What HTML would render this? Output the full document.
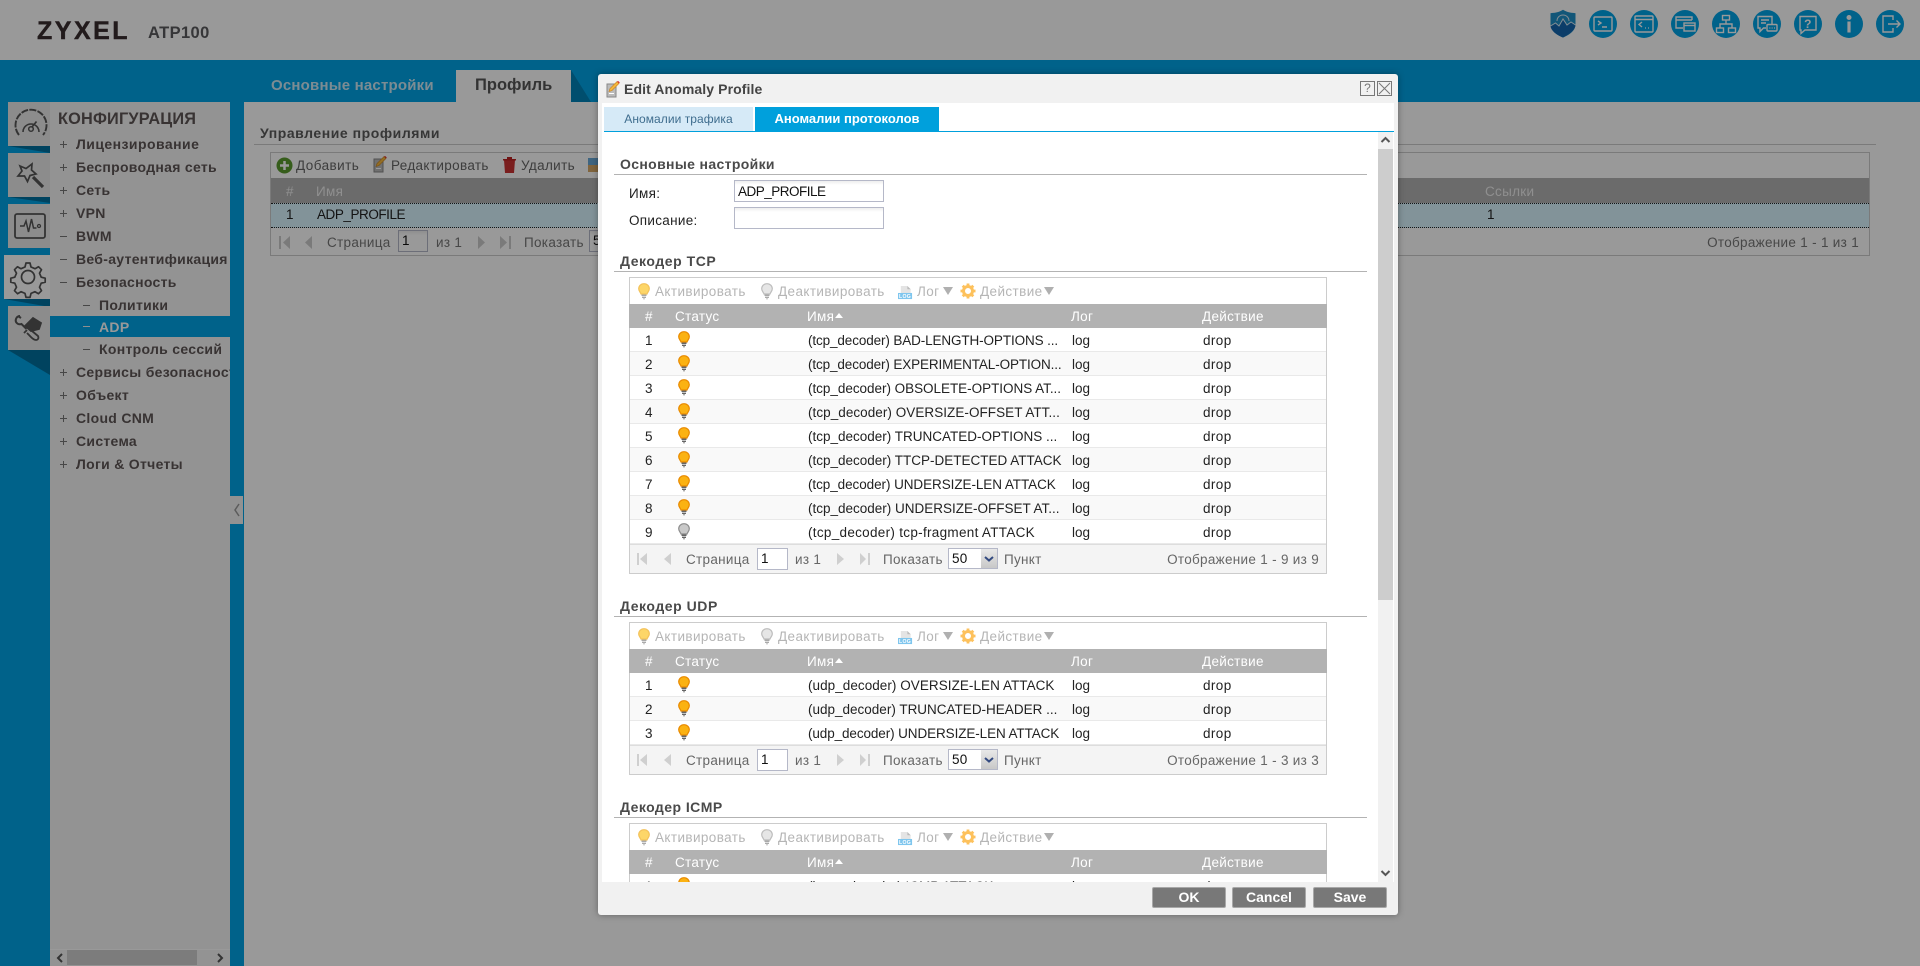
<!DOCTYPE html>
<html lang="ru"><head><meta charset="utf-8"><title>ATP100</title>
<style>
html,body{margin:0;padding:0;width:1920px;height:966px;overflow:hidden;background:#fff}
body{font-family:"Liberation Sans",sans-serif;font-size:13.5px;letter-spacing:.3px;color:#222;position:relative}
.a{position:absolute;white-space:nowrap;line-height:20px}
svg{position:absolute;display:block;overflow:visible}
#ov{position:absolute;left:0;top:0;width:1920px;height:966px;background:rgba(0,0,0,.4)}
.si{position:absolute;left:26px;font-weight:bold;font-size:14px;line-height:20px;color:#5e5555;white-space:nowrap;letter-spacing:.3px}
.sub{left:49px}
.pm{position:absolute;left:10px;width:7px;height:1px;background:#777}
.pm.p:after{content:"";position:absolute;left:3px;top:-3px;width:1px;height:7px;background:#777}
.sub2{left:33px;width:7px}
.ic{position:absolute;width:42px;height:44px;left:8px;background:#eaeaea}
.cir{position:absolute;top:10px;width:28px;height:28px;border-radius:50%;background:#00a3e6}
.cir svg{left:0;top:0}
.cir *{fill:none;stroke:#fff;stroke-width:1.4}
#modal{position:absolute;left:598px;top:74px;width:800px;height:841px;background:#f1f1f1;border-radius:3px;box-shadow:0 0 7px rgba(0,0,0,.35)}
.sh{position:absolute;left:620px;font-weight:bold;font-size:14px;line-height:20px;color:#4a4a4a;white-space:nowrap;letter-spacing:.35px}
.ln{position:absolute;left:614px;width:753px;height:1px;background:#b3b3b3}
.box{position:absolute;left:629px;width:696px;border:1px solid #ccc;background:#fff;height:auto}
.tb{color:#b5b5b5;top:4px;letter-spacing:.4px}
.hd{position:absolute;left:-1px;right:-1px;top:26px;height:24px;background:#b2b2b2;color:#fff}
.hd .a{top:3px}
.r{position:absolute;left:0;right:0;height:23px;border-bottom:1px solid #e9e9e9}
.r.e{background:#f9f9f9}
.r .a{top:3px;letter-spacing:0}
.r svg{top:3px}
.pg{position:absolute;left:0;right:0;height:28px;background:#f4f4f4;border-top:1px solid #ddd;color:#666}
.pg .a{top:5px}
.inp{position:absolute;box-sizing:border-box;border:1px solid #b5b8c8;background:linear-gradient(#eee,#fff 4px);color:#111;padding-left:3px;line-height:19px}
.tri{position:absolute;width:0;height:0;border-left:5px solid transparent;border-right:5px solid transparent;border-top:8px solid #b0b0b0}
.btn{position:absolute;top:887px;width:74px;height:21px;box-sizing:border-box;background:#787878;border:1px solid #a8a8a8;border-radius:2px;color:#fff;font-weight:bold;font-size:14px;letter-spacing:0;text-align:center;line-height:19px}
</style></head><body>
<svg width="0" height="0" style="position:absolute"><defs>
<symbol id="bulb" viewBox="0 0 12 17"><path d="M6 .7C2.9.7.7 3 .7 5.8c0 2.3 1.700 3.300 2.300 5.200h6c.6-1.900 2.300-2.900 2.300-5.200C11.300 3 9.100.7 6 .7z" fill="#fbb212" stroke="#e98a00" stroke-width="1.200"/><path d="M3.500 11.500h5v1.500h-5zM4 13.600h4v1.400H4z" fill="#666"/><path d="M5 15.300h2v1H5z" fill="#888"/></symbol>
<symbol id="bulbg" viewBox="0 0 12 17"><path d="M6 .7C2.900.7.700 3 .700 5.800c0 2.300 1.700 3.300 2.300 5.200h6c.6-1.900 2.300-2.900 2.300-5.200C11.300 3 9.100.7 6 .7z" fill="#c9c9c9" stroke="#8d8d8d" stroke-width="1.200"/><path d="M3.500 11.500h5v1.500h-5zM4 13.600h4v1.400H4z" fill="#666"/><path d="M5 15.300h2v1H5z" fill="#888"/></symbol>
<symbol id="bulbl" viewBox="0 0 12 17"><path d="M6 .7C2.900.7.700 3 .700 5.800c0 2.300 1.700 3.300 2.300 5.200h6c.6-1.900 2.300-2.900 2.300-5.200C11.300 3 9.100.7 6 .7z" fill="#fdd668" stroke="#f3c25a" stroke-width="1.200"/><path d="M3.500 11.500h5v1.500h-5zM4 13.600h4v1.400H4z" fill="#aaa"/><path d="M5 15.300h2v1H5z" fill="#bbb"/></symbol>
<symbol id="bulblg" viewBox="0 0 12 17"><path d="M6 .7C2.900.7.700 3 .700 5.800c0 2.300 1.700 3.300 2.300 5.200h6c.6-1.900 2.300-2.900 2.300-5.200C11.300 3 9.100.7 6 .7z" fill="#e6e6e6" stroke="#bdbdbd" stroke-width="1.200"/><path d="M3.500 11.500h5v1.500h-5zM4 13.600h4v1.400H4z" fill="#aaa"/><path d="M5 15.300h2v1H5z" fill="#bbb"/></symbol>
<symbol id="log" viewBox="0 0 16 15"><path d="M3 .5h7l3.500 3.500v7H3z" fill="#e4e4e4"/><path d="M10 .5V4h3.500z" fill="#bbb"/><rect x="0" y="8" width="15" height="6.500" fill="#7fc6ee"/><text x="7.500" y="13.500" font-size="5.500" font-weight="bold" fill="#fff" text-anchor="middle" font-family="Liberation Sans">LOG</text></symbol>
<symbol id="gear" viewBox="0 0 16 16"><circle cx="8" cy="8" r="4.500" fill="none" stroke="#fdc15c" stroke-width="3"/><path d="M8 .5v3M8 12.500v3M.5 8h3M12.500 8h3M2.700 2.700l2.100 2.100M11.200 11.200l2.100 2.100M2.700 13.300l2.100-2.100M11.200 4.800l2.100-2.100" stroke="#fdc15c" stroke-width="2.800"/></symbol>
<symbol id="pencil" viewBox="0 0 14 17"><path d="M1 3h9v13H1z" fill="#bbb" stroke="#888"/><path d="M3 12h5v1H3z" fill="#fff"/><path d="M3 10.500l1-3 7-7 2 2-7 7z" fill="#f4b63d" stroke="#c8801c" stroke-width=".6"/><path d="M11 .5l2 2 .8-1L12.200 0z" fill="#d33"/></symbol>
</defs></svg>

<!-- HEADER -->
<div class="a" style="left:37px;top:19px;font-size:25px;line-height:24px;font-weight:bold;letter-spacing:2.500px;color:#3a2d30;-webkit-text-stroke:.4px #3a2d30">ZYXEL</div>
<div class="a" style="left:148px;top:23px;font-size:16.500px;font-weight:bold;color:#5a5a5e;letter-spacing:.4px">ATP100</div>

<svg style="left:1549px;top:9px" width="28" height="29" viewBox="0 0 28 29"><path d="M14 .8C10 3.500 5 4 1.500 4.200v11C1.500 22 8 26 14 28.500 20 26 26.500 22 26.500 15.200v-11C23 4 18 3.500 14 .8z" fill="#1f8fc8"/><path d="M1.500 17l5-3 3.500 3 4-7 4 6 4-3 4.500 3c-.5 5-6 9-12.500 12.500C8 26 2 22 1.500 17z" fill="#1466b0"/><path d="M14 6c-3.500 0-6 2.700-6 6M14 6c3.500 0 6 2.700 6 6M1.500 17l5-3 3.500 3 4-7 4 6 4-3 4.500 3" fill="none" stroke="#d9eaf4" stroke-width="1"/></svg>
<div class="cir" style="left:1589px"><svg width="28" height="28" viewBox="0 0 28 28"><rect x="5" y="7" width="18" height="14" rx="1"/><path d="M9 11l3 2-3 2M13 17h5"/></svg></div>
<div class="cir" style="left:1630px"><svg width="28" height="28" viewBox="0 0 28 28"><rect x="5" y="6" width="18" height="16" rx="1"/><path d="M5 9.500h18M12 12l-3 2.500 3 2.500M15 18h.8M18 18h.8"/></svg></div>
<div class="cir" style="left:1671px"><svg width="28" height="28" viewBox="0 0 28 28"><path d="M21 10V7H5v11h7M5 10h16"/><rect x="13" y="13" width="11" height="8"/><path d="M13 15.500h11"/></svg></div>
<div class="cir" style="left:1712px"><svg width="28" height="28" viewBox="0 0 28 28"><rect x="10.500" y="5.500" width="7" height="4.500"/><path d="M14 10v4M8 18v-4h12v4"/><rect x="4.500" y="18" width="7" height="4.500"/><rect x="16.500" y="18" width="7" height="4.500"/></svg></div>
<div class="cir" style="left:1753px"><svg width="28" height="28" viewBox="0 0 28 28"><path d="M19 14V6.500H5V18h2v3.500l3.500-3.500H13"/><path d="M8 10h8M8 13h5"/><rect x="14" y="14.500" width="10" height="6.500" rx="1"/><path d="M16.500 18h.8M18.700 18h.8M21 18h.8" stroke-width="1.500"/></svg></div>
<div class="cir" style="left:1794px"><svg width="28" height="28" viewBox="0 0 28 28"><path d="M6 6.500h16V20H11l-4 3.500V20H6z"/><text x="14" y="18" font-size="12" font-weight="bold" text-anchor="middle" font-family="Liberation Sans" style="fill:#fff;stroke:none">?</text></svg></div>
<div class="cir" style="left:1835px"><svg width="28" height="28" viewBox="0 0 28 28"><circle cx="14" cy="7.500" r="1.800" style="fill:#fff"/><path d="M14 11.500v11" style="stroke-width:3.200"/></svg></div>
<div class="cir" style="left:1876px"><svg width="28" height="28" viewBox="0 0 28 28"><path d="M17 10V6H7v16h10v-4M12 14h12M20.500 10.500L24 14l-3.500 3.500"/></svg></div>

<!-- BLUE -->
<div style="position:absolute;left:0;top:60px;width:1920px;height:906px;background:#00a3e6"></div>
<div style="position:absolute;left:244px;top:102px;width:1676px;height:864px;background:#fff"></div>
<div class="a" style="left:271px;top:76px;font-size:15px;font-weight:bold;color:#cfe9f5;letter-spacing:.2px">Основные настройки</div>
<div style="position:absolute;left:456px;top:70px;width:115px;height:32px;background:#fff"></div>
<svg style="left:571px;top:70px" width="27" height="32"><path d="M0 0l20 32H0z" fill="#0082b8"/></svg>
<div class="a" style="left:475px;top:75px;font-size:16.500px;font-weight:bold;color:#555;letter-spacing:0">Профиль</div>

<!-- LEFT ICONS -->
<svg style="left:0;top:146px" width="50" height="250"><path d="M8 0l42 7V0z" fill="#00719f"/><path d="M8 51l42 6v-6z" fill="#00719f"/><path d="M4 153l46 8v-8z" fill="#00719f"/><path d="M8 204l42 25v-25z" fill="#00719f"/></svg>
<div class="ic" style="top:102px"><svg width="42" height="44" viewBox="0 0 42 44" fill="none" stroke="#555" stroke-width="1.900"><path d="M11 33a15.500 15.500 0 1 1 24 0" stroke-dasharray="7 1.300"/><path d="M15 30a8 8 0 0 1 16 0" stroke-width="1.600"/><circle cx="23" cy="27" r="2.300" stroke-width="1.500"/><path d="M24 25l4.500-5.500" stroke-width="1.700"/></svg></div>
<div class="ic" style="top:153px"><svg width="42" height="44" viewBox="0 0 42 44" fill="none" stroke="#555" stroke-width="1.700"><path d="M12 13L18 15.500 24 11 23.500 17 28 21 22 22.500 19.500 28.500 16.500 23 10 23 14 18z"/><path d="M25 24l10 10" stroke-width="3.200"/></svg></div>
<div class="ic" style="top:204px"><svg width="42" height="44" viewBox="0 0 42 44" fill="none" stroke="#555" stroke-width="1.800"><rect x="7" y="10" width="30" height="24" rx="2"/><path d="M12 22h4l2-5 2.500 11 3-13 2 9h3" stroke-width="1.500"/><circle cx="31" cy="22" r="1.500" stroke-width="1.300"/></svg></div>
<div class="ic" style="top:255px;left:4px;width:46px;background:#fff"><svg width="46" height="44" viewBox="0 0 46 44" fill="none" stroke="#555" stroke-width="1.700"><path d="M21 8h4l1 4 4 1.700 3.500-2 3 3-2 3.500 1.700 4 4 1v4l-4 1-1.700 4 2 3.500-3 3-3.500-2-4 1.700-1 4h-4l-1-4-4-1.700-3.500 2-3-3 2-3.500-1.700-4-4-1v-4l4-1 1.700-4-2-3.500 3-3 3.500 2 4-1.700z" stroke-linejoin="round" transform="translate(1,0)"/><circle cx="24" cy="22" r="6.500"/></svg></div>
<div class="ic" style="top:306px"><svg width="42" height="44" viewBox="0 0 42 44" fill="none" stroke="#555" stroke-width="1.800"><path d="M12 10c-3 0-5 3-4 6 1.500 2.500 4 2.500 5.500 2l5 5M10 10l3 2" stroke-width="2"/><path d="M17 20l8-8 8 5-2 6-8 2z" fill="#555"/><path d="M19 24l-3 3M24 25l6 5c1 2 0 4-2 4-3 0-5-3-7-5l-2-2" stroke-width="1.800"/></svg></div>

<!-- SIDEBAR -->
<div style="position:absolute;left:50px;top:102px;width:180px;height:864px;background:#f5f5f5;overflow:hidden">
<div class="si" style="left:8px;top:6px;font-size:16.300px;letter-spacing:.2px;line-height:22px">КОНФИГУРАЦИЯ</div>
<div class="pm p" style="top:42px"></div><div class="si" style="top:32px;letter-spacing:.45px">Лицензирование</div>
<div class="pm p" style="top:65px"></div><div class="si" style="top:55px">Беспроводная сеть</div>
<div class="pm p" style="top:88px"></div><div class="si" style="top:78px">Сеть</div>
<div class="pm p" style="top:111px"></div><div class="si" style="top:101px">VPN</div>
<div class="pm" style="top:134px"></div><div class="si" style="top:124px">BWM</div>
<div class="pm" style="top:157px"></div><div class="si" style="top:147px">Веб-аутентификация</div>
<div class="pm" style="top:180px"></div><div class="si" style="top:170px">Безопасность</div>
<div class="pm sub2" style="top:203px"></div><div class="si sub" style="top:193px">Политики</div>
<div style="position:absolute;left:0;top:214px;width:180px;height:21px;background:#00a3e6"></div>
<div class="pm sub2" style="top:224px;background:#eee"></div><div class="si sub" style="top:215px;color:#fff">ADP</div>
<div class="pm sub2" style="top:247px"></div><div class="si sub" style="top:237px">Контроль сессий</div>
<div class="pm p" style="top:270px"></div><div class="si" style="top:260px">Сервисы безопасности</div>
<div class="pm p" style="top:293px"></div><div class="si" style="top:283px">Объект</div>
<div class="pm p" style="top:316px"></div><div class="si" style="top:306px">Cloud CNM</div>
<div class="pm p" style="top:339px"></div><div class="si" style="top:329px">Система</div>
<div class="pm p" style="top:362px"></div><div class="si" style="top:352px">Логи &amp; Отчеты</div>
<div style="position:absolute;left:0;top:847px;width:180px;height:1px;background:#fff"></div>
<div style="position:absolute;left:17px;top:848px;width:130px;height:15px;background:#cfcfcf"></div>
<svg style="left:5px;top:851px" width="170" height="10" fill="none" stroke="#555" stroke-width="2"><path d="M7 1L3 5l4 4M163 1l4 4-4 4"/></svg>
</div>
<div style="position:absolute;left:230px;top:496px;width:13px;height:28px;background:#f3f3f3"></div>
<svg style="left:233px;top:503px" width="8" height="14" fill="none" stroke="#999" stroke-width="1.500"><path d="M6 1L2 7l4 6"/></svg>

<!-- BACK PAGE -->
<div class="a" style="left:260px;top:123px;font-size:14px;font-weight:bold;color:#5a5a5a;letter-spacing:.55px">Управление профилями</div>
<div style="position:absolute;left:254px;top:144px;width:1622px;height:1px;background:#ccc"></div>
<div style="position:absolute;left:270px;top:152px;width:1598px;height:102px;border:1px solid #ccc;background:#fff"></div>
<svg style="left:276px;top:157px" width="17" height="17"><circle cx="8.500" cy="8.500" r="8" fill="#5a9c2e"/><path d="M8.500 4v9M4 8.500h9" stroke="#fff" stroke-width="2.500"/></svg>
<div class="a" style="left:296px;top:156px;color:#666;letter-spacing:.45px">Добавить</div>
<svg style="left:373px;top:156px" width="14" height="17"><use href="#pencil"/></svg>
<div class="a" style="left:391px;top:156px;color:#666;letter-spacing:.35px">Редактировать</div>
<svg style="left:503px;top:157px" width="13" height="16"><path d="M1 3h11l-1 13H2z" fill="#c33"/><path d="M0 2h13v1.500H0zM4 0h5v2H4z" fill="#b22"/></svg>
<div class="a" style="left:521px;top:156px;color:#666;letter-spacing:.35px">Удалить</div>
<div style="position:absolute;left:588px;top:158px;width:12px;height:7px;background:#6aa9d8"></div>
<div style="position:absolute;left:588px;top:165px;width:12px;height:7px;background:#d8a868"></div>
<div style="position:absolute;left:271px;top:178px;width:1598px;height:25px;background:#b2b2b2"></div>
<div class="a" style="left:286px;top:182px;color:#eee">#</div>
<div class="a" style="left:316px;top:182px;color:#eee">Имя</div>
<div class="a" style="left:1485px;top:182px;color:#eee">Ссылки</div>
<div style="position:absolute;left:271px;top:203px;width:1598px;height:23px;background:#d9f5ff;border-top:1px dotted #222;border-bottom:1px dotted #222"></div>
<div class="a" style="left:286px;top:205px;color:#222">1</div>
<div class="a" style="left:317px;top:205px;color:#222;letter-spacing:-.45px">ADP_PROFILE</div>
<div class="a" style="left:1487px;top:205px;color:#222">1</div>
<svg style="left:279px;top:236px" width="240" height="14" fill="#ccc"><path d="M0 0h2v13H0zM11 0v13L4 6.500zM33 0v13l-7-6.500zM199 0v13l7-6.500zM221 0v13l7-6.500zM230 0h2v13h-2z"/></svg>
<div class="a" style="left:327px;top:233px;color:#777">Страница</div>
<div class="inp" style="left:398px;top:230px;width:30px;height:22px">1</div>
<div class="a" style="left:436px;top:233px;color:#777">из 1</div>
<div class="a" style="left:524px;top:233px;color:#777">Показать</div>
<div class="inp" style="left:589px;top:230px;width:30px;height:22px">50</div>
<div class="a" style="right:61px;top:233px;color:#777">Отображение 1 - 1 из 1</div>

<div id="ov"></div>

<!-- MODAL -->
<div id="modal"></div>
<svg style="left:606px;top:81px" width="14" height="17"><use href="#pencil"/></svg>
<div class="a" style="left:624px;top:79px;font-size:14px;font-weight:bold;color:#444;letter-spacing:.1px">Edit Anomaly Profile</div>
<div style="position:absolute;left:1360px;top:81px;width:13px;height:13px;border:1px solid #777;text-align:center;font-size:12px;line-height:13px;color:#777;letter-spacing:0">?</div>
<svg style="left:1377px;top:81px" width="15" height="15" fill="none" stroke="#777"><path d="M.5.500h14v14H.5zM2 2l11 11M13 2L2 13"/></svg>

<div style="position:absolute;left:602px;top:103px;width:792px;height:779px;background:#fff"></div>
<div style="position:absolute;left:604px;top:107px;width:149px;height:24px;background:#d6eaf7;color:#3f6d8e;line-height:24px;text-align:center;font-size:12px;letter-spacing:.05px">Аномалии трафика</div>
<div style="position:absolute;left:755px;top:107px;width:184px;height:24px;background:#00a0dc;color:#fff;line-height:24px;text-align:center;font-size:13px;font-weight:bold;letter-spacing:0">Аномалии протоколов</div>
<div style="position:absolute;left:604px;top:131px;width:790px;height:1px;background:#00a0dc"></div>

<!-- scrollbar -->
<div style="position:absolute;left:1378px;top:132px;width:15px;height:750px;background:#f1f1f1"></div>
<div style="position:absolute;left:1378px;top:149px;width:15px;height:451px;background:#cdcdcd"></div>
<svg style="left:1380px;top:136px" width="11" height="8" fill="none" stroke="#555" stroke-width="2"><path d="M1.500 6l4-4 4 4"/></svg>
<svg style="left:1380px;top:869px" width="11" height="8" fill="none" stroke="#555" stroke-width="2"><path d="M1.500 2l4 4 4-4"/></svg>

<!-- scroll content -->
<div style="position:absolute;left:0;top:0;width:1920px;height:966px;clip-path:inset(132px 0 84px 0)">
<div class="sh" style="top:154px">Основные настройки</div><div class="ln" style="top:174px"></div>
<div class="a" style="left:629px;top:184px">Имя:</div>
<div class="inp" style="left:734px;top:180px;width:150px;height:22px;line-height:22px;letter-spacing:-.5px">ADP_PROFILE</div>
<div class="a" style="left:629px;top:211px">Описание:</div>
<div class="inp" style="left:734px;top:207px;width:150px;height:22px"></div>

<div class="sh" style="top:251px;letter-spacing:.55px">Декодер TCP</div><div class="ln" style="top:271px"></div>
<div class="box" style="top:277px;height:295px">
<svg style="left:8px;top:5px" width="12" height="17"><use href="#bulbl"/></svg><div class="a tb" style="left:25px">Активировать</div>
<svg style="left:131px;top:5px" width="12" height="17"><use href="#bulblg"/></svg><div class="a tb" style="left:148px">Деактивировать</div>
<svg style="left:268px;top:7px" width="15" height="15"><use href="#log"/></svg><div class="a tb" style="left:287px">Лог</div><div class="tri" style="left:313px;top:9px"></div>
<svg style="left:330px;top:5px" width="16" height="16"><use href="#gear"/></svg><div class="a tb" style="left:350px">Действие</div><div class="tri" style="left:414px;top:9px"></div>
<div class="hd"><div class="a" style="left:16px">#</div><div class="a" style="left:46px">Статус</div><div class="a" style="left:178px">Имя</div><div class="tri" style="left:206px;top:9px;border-left-width:4px;border-right-width:4px;border-top:0;border-bottom:5px solid #fff"></div><div class="a" style="left:442px">Лог</div><div class="a" style="left:573px">Действие</div></div>
<div class="r" style="top:50px"><div class="a" style="left:15px">1</div><svg style="left:48px" width="12" height="17"><use href="#bulb"/></svg><div class="a" style="left:178px;letter-spacing:-.12px">(tcp_decoder) BAD-LENGTH-OPTIONS ...</div><div class="a" style="left:442px">log</div><div class="a" style="left:573px;letter-spacing:.4px">drop</div></div>
<div class="r e" style="top:74px"><div class="a" style="left:15px">2</div><svg style="left:48px" width="12" height="17"><use href="#bulb"/></svg><div class="a" style="left:178px;letter-spacing:-.12px">(tcp_decoder) EXPERIMENTAL-OPTION...</div><div class="a" style="left:442px">log</div><div class="a" style="left:573px;letter-spacing:.4px">drop</div></div>
<div class="r" style="top:98px"><div class="a" style="left:178px;letter-spacing:-.03px">(tcp_decoder) OBSOLETE-OPTIONS AT...</div><div class="a" style="left:15px">3</div><svg style="left:48px" width="12" height="17"><use href="#bulb"/></svg><div class="a" style="left:442px">log</div><div class="a" style="left:573px;letter-spacing:.4px">drop</div></div>
<div class="r e" style="top:122px"><div class="a" style="left:15px">4</div><svg style="left:48px" width="12" height="17"><use href="#bulb"/></svg><div class="a" style="left:178px;letter-spacing:.05px">(tcp_decoder) OVERSIZE-OFFSET ATT...</div><div class="a" style="left:442px">log</div><div class="a" style="left:573px;letter-spacing:.4px">drop</div></div>
<div class="r" style="top:146px"><div class="a" style="left:15px">5</div><svg style="left:48px" width="12" height="17"><use href="#bulb"/></svg><div class="a" style="left:178px">(tcp_decoder) TRUNCATED-OPTIONS ...</div><div class="a" style="left:442px">log</div><div class="a" style="left:573px;letter-spacing:.4px">drop</div></div>
<div class="r e" style="top:170px"><div class="a" style="left:15px">6</div><svg style="left:48px" width="12" height="17"><use href="#bulb"/></svg><div class="a" style="left:178px">(tcp_decoder) TTCP-DETECTED ATTACK</div><div class="a" style="left:442px">log</div><div class="a" style="left:573px;letter-spacing:.4px">drop</div></div>
<div class="r" style="top:194px"><div class="a" style="left:15px">7</div><svg style="left:48px" width="12" height="17"><use href="#bulb"/></svg><div class="a" style="left:178px;letter-spacing:-.07px">(tcp_decoder) UNDERSIZE-LEN ATTACK</div><div class="a" style="left:442px">log</div><div class="a" style="left:573px;letter-spacing:.4px">drop</div></div>
<div class="r e" style="top:218px"><div class="a" style="left:15px">8</div><svg style="left:48px" width="12" height="17"><use href="#bulb"/></svg><div class="a" style="left:178px">(tcp_decoder) UNDERSIZE-OFFSET AT...</div><div class="a" style="left:442px">log</div><div class="a" style="left:573px;letter-spacing:.4px">drop</div></div>
<div class="r" style="top:242px"><div class="a" style="left:15px">9</div><svg style="left:48px" width="12" height="17"><use href="#bulbg"/></svg><div class="a" style="left:178px;letter-spacing:.3px">(tcp_decoder) tcp-fragment ATTACK</div><div class="a" style="left:442px">log</div><div class="a" style="left:573px;letter-spacing:.4px">drop</div></div>
<div class="pg" style="top:266px"><svg style="left:7px;top:8px" width="230" height="13" fill="#cfcfcf"><path d="M0 0h2v12H0zM10 0v12L3 6zM34 0v12l-7-6zM200 0v12l7-6zM223 0v12l6-6zM231 0h2v12h-2z"/></svg><div class="a" style="left:56px">Страница</div><div class="inp" style="left:127px;top:3px;width:31px;height:22px;line-height:19px;background:#fff">1</div><div class="a" style="left:165px">из 1</div><div class="a" style="left:253px">Показать</div><div class="inp" style="left:318px;top:3px;width:50px;height:21px;background:#fff">50</div><div style="position:absolute;left:351px;top:4px;width:16px;height:19px;background:linear-gradient(#e8e8e8,#c8c8c8)"></div><svg style="left:354px;top:11px" width="10" height="6" fill="none" stroke="#334a80" stroke-width="2"><path d="M1 1l4 3.500L9 1"/></svg><div class="a" style="left:374px">Пункт</div><div class="a" style="right:7px">Отображение 1 - 9 из 9</div></div>
</div>

<div class="sh" style="top:596px;letter-spacing:.55px">Декодер UDP</div><div class="ln" style="top:616px"></div>
<div class="box" style="top:622px;height:151px">
<svg style="left:8px;top:5px" width="12" height="17"><use href="#bulbl"/></svg><div class="a tb" style="left:25px">Активировать</div>
<svg style="left:131px;top:5px" width="12" height="17"><use href="#bulblg"/></svg><div class="a tb" style="left:148px">Деактивировать</div>
<svg style="left:268px;top:7px" width="15" height="15"><use href="#log"/></svg><div class="a tb" style="left:287px">Лог</div><div class="tri" style="left:313px;top:9px"></div>
<svg style="left:330px;top:5px" width="16" height="16"><use href="#gear"/></svg><div class="a tb" style="left:350px">Действие</div><div class="tri" style="left:414px;top:9px"></div>
<div class="hd"><div class="a" style="left:16px">#</div><div class="a" style="left:46px">Статус</div><div class="a" style="left:178px">Имя</div><div class="tri" style="left:206px;top:9px;border-left-width:4px;border-right-width:4px;border-top:0;border-bottom:5px solid #fff"></div><div class="a" style="left:442px">Лог</div><div class="a" style="left:573px">Действие</div></div>
<div class="r" style="top:50px"><div class="a" style="left:15px">1</div><svg style="left:48px" width="12" height="17"><use href="#bulb"/></svg><div class="a" style="left:178px;letter-spacing:.05px">(udp_decoder) OVERSIZE-LEN ATTACK</div><div class="a" style="left:442px">log</div><div class="a" style="left:573px;letter-spacing:.4px">drop</div></div>
<div class="r e" style="top:74px"><div class="a" style="left:15px">2</div><svg style="left:48px" width="12" height="17"><use href="#bulb"/></svg><div class="a" style="left:178px">(udp_decoder) TRUNCATED-HEADER ...</div><div class="a" style="left:442px">log</div><div class="a" style="left:573px;letter-spacing:.4px">drop</div></div>
<div class="r" style="top:98px"><div class="a" style="left:15px">3</div><svg style="left:48px" width="12" height="17"><use href="#bulb"/></svg><div class="a" style="left:178px;letter-spacing:-.1px">(udp_decoder) UNDERSIZE-LEN ATTACK</div><div class="a" style="left:442px">log</div><div class="a" style="left:573px;letter-spacing:.4px">drop</div></div>
<div class="pg" style="top:122px"><svg style="left:7px;top:8px" width="230" height="13" fill="#cfcfcf"><path d="M0 0h2v12H0zM10 0v12L3 6zM34 0v12l-7-6zM200 0v12l7-6zM223 0v12l6-6zM231 0h2v12h-2z"/></svg><div class="a" style="left:56px">Страница</div><div class="inp" style="left:127px;top:3px;width:31px;height:22px;line-height:19px;background:#fff">1</div><div class="a" style="left:165px">из 1</div><div class="a" style="left:253px">Показать</div><div class="inp" style="left:318px;top:3px;width:50px;height:21px;background:#fff">50</div><div style="position:absolute;left:351px;top:4px;width:16px;height:19px;background:linear-gradient(#e8e8e8,#c8c8c8)"></div><svg style="left:354px;top:11px" width="10" height="6" fill="none" stroke="#334a80" stroke-width="2"><path d="M1 1l4 3.500L9 1"/></svg><div class="a" style="left:374px">Пункт</div><div class="a" style="right:7px">Отображение 1 - 3 из 3</div></div>
</div>

<div class="sh" style="top:797px;letter-spacing:.45px">Декодер ICMP</div><div class="ln" style="top:817px"></div>
<div class="box" style="top:823px;height:151px">
<svg style="left:8px;top:5px" width="12" height="17"><use href="#bulbl"/></svg><div class="a tb" style="left:25px">Активировать</div>
<svg style="left:131px;top:5px" width="12" height="17"><use href="#bulblg"/></svg><div class="a tb" style="left:148px">Деактивировать</div>
<svg style="left:268px;top:7px" width="15" height="15"><use href="#log"/></svg><div class="a tb" style="left:287px">Лог</div><div class="tri" style="left:313px;top:9px"></div>
<svg style="left:330px;top:5px" width="16" height="16"><use href="#gear"/></svg><div class="a tb" style="left:350px">Действие</div><div class="tri" style="left:414px;top:9px"></div>
<div class="hd"><div class="a" style="left:16px">#</div><div class="a" style="left:46px">Статус</div><div class="a" style="left:178px">Имя</div><div class="tri" style="left:206px;top:9px;border-left-width:4px;border-right-width:4px;border-top:0;border-bottom:5px solid #fff"></div><div class="a" style="left:442px">Лог</div><div class="a" style="left:573px">Действие</div></div>
<div class="r" style="top:50px"><div class="a" style="left:15px">1</div><svg style="left:48px" width="12" height="17"><use href="#bulb"/></svg><div class="a" style="left:178px">(icmp_decoder) ICMP ATTACK</div><div class="a" style="left:442px">log</div><div class="a" style="left:573px;letter-spacing:.4px">drop</div></div>
</div>
</div>

<div class="btn" style="left:1152px">OK</div>
<div class="btn" style="left:1232px">Cancel</div>
<div class="btn" style="left:1313px">Save</div>
</body></html>
